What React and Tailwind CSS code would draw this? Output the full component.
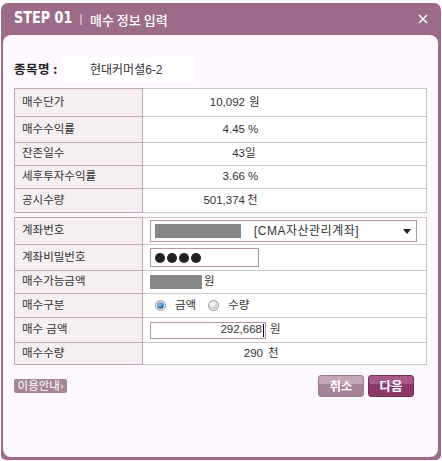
import React from "react";

function Row({ h, first, label, children }) {
  const top = first ? "border-t" : "";
  return (
    <div className={`flex ${h}`}>
      <div
        className={`flex w-[129px] shrink-0 items-center border-b border-l border-r border-[#BFA6B4] bg-[#F5EFF1] pl-[7px] ${top}`}
      >
        {label}
      </div>
      <div
        className={`flex w-[284px] items-center border-b border-r border-[#C9C9C9] bg-white ${top}`}
      >
        {children}
      </div>
    </div>
  );
}

function Num({ value, unit, w = "w-[102px]", gap = "ml-[4px]" }) {
  return (
    <>
      <span className={`${w} text-right`}>{value}</span>
      {unit ? <span className={gap}>{unit}</span> : null}
    </>
  );
}

function Radio({ checked }) {
  return (
    <svg width="11" height="11" viewBox="0 0 11 11">
      <defs>
        <radialGradient id={checked ? "rOn" : "rOff"} cx="40%" cy="35%" r="70%">
          <stop offset="0%" stopColor={checked ? "#8fd0ff" : "#ffffff"} />
          <stop offset="100%" stopColor={checked ? "#0b4f9c" : "#c8c8c8"} />
        </radialGradient>
      </defs>
      <circle cx="5.5" cy="5.5" r="5" fill="#e9e9e9" stroke="#9a9a9a" strokeWidth="1" />
      {checked ? (
        <circle cx="5.5" cy="5.5" r="3.2" fill="url(#rOn)" />
      ) : (
        <circle cx="5.5" cy="5.5" r="3.6" fill="url(#rOff)" />
      )}
    </svg>
  );
}

export default function App() {
  return (
    <div className="h-[461px] w-[442px] bg-white pl-[1px] pt-[3px] font-['Liberation_Sans','Noto_Sans_CJK_KR',sans-serif] text-[11.5px] text-[#333]">
      <div className="flex h-[457px] w-[440px] flex-col rounded-b-[5px] rounded-t-[7px] bg-[#9B6B88] pb-[3px] pl-[2px] pr-[3px]">
        {/* header */}
        <div className="flex h-[32px] shrink-0 items-center pl-[11px] pr-[10px] text-white">
          <span className="w-[57px] overflow-visible whitespace-nowrap">
            <span className="inline-block origin-left scale-x-[0.8] font-['DejaVu_Sans','Liberation_Sans',sans-serif] text-[16px] font-bold leading-none">
              STEP 01
            </span>
          </span>
          <span className="ml-[9px] h-[11px] w-[2px] bg-[#C9A9BD]" />
          <span className="ml-[8px] font-['Noto_Sans_CJK_KR',sans-serif] text-[13px] font-medium leading-none">
            매수 정보 입력
          </span>
          <svg className="ml-auto" width="10" height="10" viewBox="0 0 10 10">
            <path d="M1 1 L9 9 M9 1 L1 9" stroke="#fff" strokeWidth="1.5" />
          </svg>
        </div>

        {/* panel */}
        <div className="flex-1 rounded-[8px] bg-[#FDF8FD] pl-[11px] pt-[22px]">
          <div className="flex h-[25px] items-center">
            <span className="w-[49px] font-['Noto_Sans_CJK_KR',sans-serif] text-[12.5px] font-bold tracking-[0.5px] text-[#222]">
              종목명 :
            </span>
            <div className="flex h-full w-[132px] items-center bg-white pl-[27px] text-[12px]">
              현대커머셜6-2
            </div>
          </div>

          <div className="mt-[6px]">
            <Row h="h-[29px]" first label="매수단가">
              <Num value="10,092" unit="원" />
            </Row>
            <Row h="h-[26px]" label="매수수익률">
              <Num value="4.45" unit="%" gap="ml-[3px]" />
            </Row>
            <Row h="h-[23px]" label="잔존일수">
              <Num value="43" unit="일" gap="ml-0" />
            </Row>
            <Row h="h-[23px]" label="세후투자수익률">
              <Num value="3.66" unit="%" gap="ml-[3px]" />
            </Row>
            <Row h="h-[24px]" label="공시수량">
              <Num value="501,374" unit="천" gap="ml-[2px]" />
            </Row>
          </div>

          <div className="mt-[4px]">
            <Row h="h-[28px]" first label="계좌번호">
              <div className="ml-[7px] flex h-[22px] w-[267px] items-center border border-[#B493A7] bg-white pl-[4px] pr-[4px]">
                <span className="h-[14px] w-[86px] bg-[#858585]" />
                <span className="ml-[13px] text-[12px] tracking-[0.5px]">[CMA자산관리계좌]</span>
                <svg className="ml-auto mr-[1px]" width="8" height="5" viewBox="0 0 8 5">
                  <path d="M0 0 H8 L4 5 Z" fill="#222" />
                </svg>
              </div>
            </Row>
            <Row h="h-[26px]" label="계좌비밀번호">
              <div className="ml-[7px] flex h-[19px] w-[109px] items-center gap-[2px] border border-[#B493A7] bg-white pl-[4px]">
                <span className="h-[10px] w-[10px] rounded-full bg-[#222]" />
                <span className="h-[10px] w-[10px] rounded-full bg-[#222]" />
                <span className="h-[10px] w-[10px] rounded-full bg-[#222]" />
                <span className="h-[10px] w-[10px] rounded-full bg-[#222]" />
              </div>
            </Row>
            <Row h="h-[23px]" label="매수가능금액">
              <span className="ml-[7px] h-[14px] w-[52px] bg-[#878787]" />
              <span className="ml-[2px]">원</span>
            </Row>
            <Row h="h-[24px]" label="매수구분">
              <span className="ml-[12px] flex">
                <Radio checked />
              </span>
              <span className="ml-[9px]">금액</span>
              <span className="ml-[12px] flex">
                <Radio />
              </span>
              <span className="ml-[9px]">수량</span>
            </Row>
            <Row h="h-[25px]" label="매수 금액">
              <div className="ml-[7px] flex h-[17px] w-[116px] items-center justify-end border border-[#B493A7] bg-white pr-[1px]">
                <span>292,668</span>
                <span className="ml-[1px] h-[13px] w-[1px] bg-black" />
              </div>
              <span className="ml-[4px]">원</span>
            </Row>
            <Row h="h-[22px]" label="매수수량">
              <Num value="290" unit="천" w="w-[120px]" gap="ml-[5px]" />
            </Row>
          </div>

          <div className="mt-[10px] flex h-[22px] w-[400px] items-center">
            <span className="flex h-[14px] w-[53px] items-center justify-center rounded-[2px] bg-[#A78598] font-['Noto_Sans_CJK_KR',sans-serif] text-[11.5px] leading-none text-white">
              이용안내›
            </span>
            <button
              type="button"
              className="ml-auto flex h-[22px] w-[46px] items-center justify-center rounded-[3px] border border-[#9A7A8E] bg-linear-to-b from-[#C3A6B7] from-40% to-[#A5849A] to-40% font-['Noto_Sans_CJK_KR',sans-serif] text-[12.5px] font-bold text-white"
            >
              취소
            </button>
            <button
              type="button"
              className="ml-[4px] flex h-[22px] w-[46px] items-center justify-center rounded-[3px] border border-[#7A2A58] bg-linear-to-b from-[#A55A86] from-40% to-[#8C3869] to-40% font-['Noto_Sans_CJK_KR',sans-serif] text-[12.5px] font-bold text-white"
            >
              다음
            </button>
          </div>
        </div>
      </div>
    </div>
  );
}
